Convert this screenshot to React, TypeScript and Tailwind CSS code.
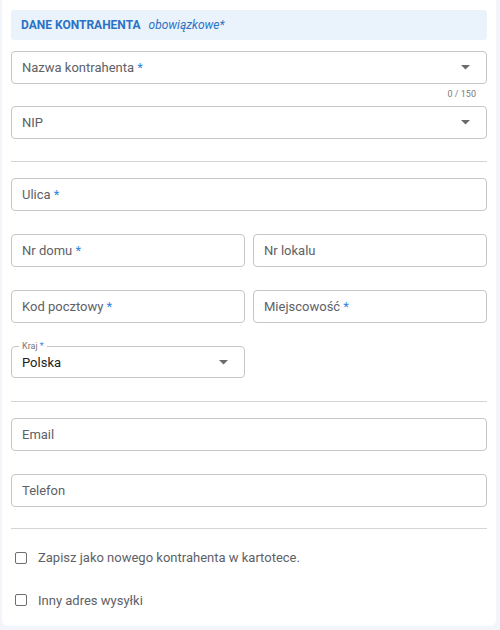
import React from 'react';

const Star = () => <span className="text-[#2f86de]"> *</span>;

function Caret() {
    return (
        <svg width="9" height="5" viewBox="0 0 9 5" className="shrink-0">
            <path d="M0 0h9L4.5 4.5z" fill="#6b6b6b" />
        </svg>
    );
}

function Field({ label, required, select, className = '' }: { label: string; required?: boolean; select?: boolean; className?: string }) {
    return (
        <div className={`h-[33px] border border-[#c6c6c6] rounded-[4px] bg-white flex items-center pl-[10px] pr-[16px] ${className}`}>
            <span className="flex-1 text-[13px] text-[#5e6166]">
                {label}
                {required && <Star />}
            </span>
            {select && <Caret />}
        </div>
    );
}

function Divider({ className = '' }: { className?: string }) {
    return <div className={`h-px bg-[#d4d4d4] ${className}`} />;
}

function Check({ label, className = '' }: { label: string; className?: string }) {
    return (
        <label className={`flex items-center gap-[11px] pl-[4px] ${className}`}>
            <span className="w-[12px] h-[12px] border-[1.5px] border-[#6e6e6e] rounded-[2px] bg-white" />
            <span className="text-[13px] text-[#5e6166]">{label}</span>
        </label>
    );
}

export default function App() {
    return (
        <div className="w-[500px] h-[630px] bg-[#f2f6fa] pl-[2px] pr-[4px]" style={{ fontFamily: 'Roboto, "Noto Sans", sans-serif' }}>
            <div className="bg-white rounded-b-[6px] h-[626px] px-[9px] pt-[10px] flex flex-col">
                <div className="h-[30px] bg-[#eaf2fb] rounded-[3px] flex items-center pl-[10px] gap-[8px]">
                    <span className="text-[12px] font-bold text-[#2a73c4]">DANE KONTRAHENTA</span>
                    <span className="text-[12px] italic text-[#2a73c4]">obowiązkowe*</span>
                </div>

                <Field label="Nazwa kontrahenta" required select className="mt-[11px]" />
                <div className="h-[22px] flex items-center justify-end pr-[11px] text-[9px] text-[#7a7a7a]">0 / 150</div>
                <Field label="NIP" select />

                <Divider className="mt-[22px]" />

                <Field label="Ulica" required className="mt-[16px]" />

                <div className="grid grid-cols-2 gap-[8px] mt-[23px]">
                    <Field label="Nr domu" required className="h-[32px]" />
                    <Field label="Nr lokalu" className="h-[32px]" />
                </div>
                <div className="grid grid-cols-2 gap-[8px] mt-[23px]">
                    <Field label="Kod pocztowy" required className="h-[32px]" />
                    <Field label="Miejscowość" required className="h-[32px]" />
                </div>

                <div className="grid grid-cols-2 gap-[8px] mt-[23px]">
                    <div className="relative h-[32px] border border-[#c6c6c6] rounded-[4px] flex items-center pl-[10px] pr-[16px]">
                        <span className="absolute -top-[7px] left-[7px] bg-white px-[3px] text-[9px] leading-[12px] text-[#777]">
                            Kraj<span className="text-[#2f86de]"> *</span>
                        </span>
                        <span className="flex-1 text-[13px] text-[#222] pt-[1px]">Polska</span>
                        <Caret />
                    </div>
                </div>

                <Divider className="mt-[23px]" />

                <Field label="Email" className="mt-[16px]" />
                <Field label="Telefon" className="mt-[23px]" />

                <Divider className="mt-[21px]" />

                <Check label="Zapisz jako nowego kontrahenta w kartotece." className="mt-[19px]" />
                <Check label="Inny adres wysyłki" className="mt-[23px]" />
            </div>
        </div>
    );
}
